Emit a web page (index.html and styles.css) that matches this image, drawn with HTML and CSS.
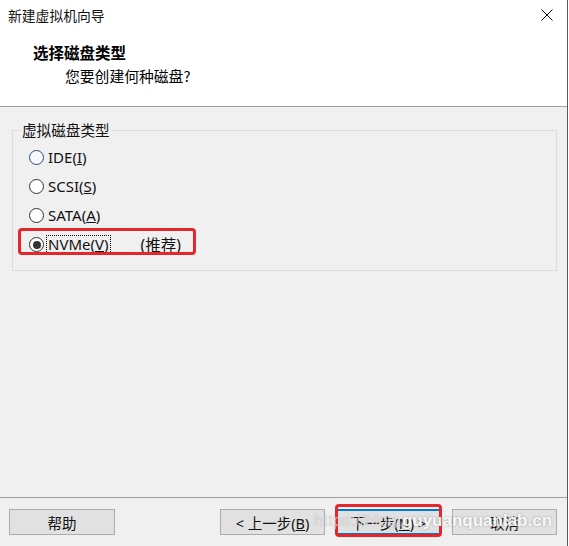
FILE: index.html
```html
<!DOCTYPE html>
<html lang="zh-CN">
<head>
<meta charset="utf-8">
<title>新建虚拟机向导</title>
<link rel="stylesheet" href="styles.css">
</head>
<body>
<div class="window">
  <div class="top">
    <div class="titlebar">
      <span class="title">新建虚拟机向导</span>
      <span class="close">
        <svg width="12" height="12" viewBox="0 0 12 12"><path d="M0.5 0.5 L11.5 11.5 M11.5 0.5 L0.5 11.5" stroke="#111" stroke-width="1" fill="none"/></svg>
      </span>
    </div>
    <div class="header">
      <div class="heading">选择磁盘类型</div>
      <div class="subtitle">您要创建何种磁盘?</div>
    </div>
  </div>
  <div class="content">
    <fieldset class="group">
      <legend class="legend">虚拟磁盘类型</legend>
      <div class="option">
        <span class="radio hover"></span>
        <span class="label">IDE(<u>I</u>)</span>
      </div>
      <div class="option">
        <span class="radio"></span>
        <span class="label">SCSI(<u>S</u>)</span>
      </div>
      <div class="option">
        <span class="radio"></span>
        <span class="label">SATA(<u>A</u>)</span>
      </div>
      <div class="option selected">
        <span class="radio checked"></span>
        <span class="label focus">NVMe(<u>V</u>)</span>
        <span class="recommend">(推荐)</span>
        <span class="mark mark-option"></span>
      </div>
    </fieldset>
  </div>
  <div class="footer">
    <button class="btn help">帮助</button>
    <div class="spacer"></div>
    <button class="btn">&lt; 上一步(<u>B</u>)</button>
    <div class="btn-wrap">
      <button class="btn default">下一步(<u>N</u>) &gt;</button>
      <span class="mark mark-btn"></span>
    </div>
    <button class="btn">取消</button>
    <span class="watermark">https://blog.<b>guyuanquanlab.cn</b></span>
  </div>
</div>
</body>
</html>
```

FILE: styles.css
```css
html, body {
  margin: 0;
  padding: 0;
  background: #ffffff;
}
body {
  width: 569px;
  height: 546px;
  overflow: hidden;
  font-family: "Noto Sans", "Noto Sans CJK SC", sans-serif;
  color: #000;
}
.window {
  width: 567px;
  height: 546px;
  border-right: 1px solid #5a5a5a;
  background: #f0f0f0;
  display: flex;
  flex-direction: column;
  position: relative;
}
.top {
  background: #ffffff;
  border-bottom: 1px solid #a0a0a0;
  height: 106px;
}
.titlebar {
  height: 30px;
  display: flex;
  align-items: center;
  justify-content: space-between;
  padding-left: 8px;
}
.title {
  font-family: "Noto Sans CJK SC", sans-serif;
  font-size: 13.8px;
  line-height: 30px;
  color: #111;
}
.close {
  width: 40px;
  height: 30px;
  display: flex;
  align-items: center;
  justify-content: center;
}
.header {
  padding-top: 12px;
}
.heading {
  font-family: "Noto Sans CJK SC", sans-serif;
  font-weight: 700;
  font-size: 15.5px;
  line-height: 20px;
  padding-left: 33px;
}
.subtitle {
  font-family: "Noto Sans CJK SC", sans-serif;
  font-size: 14.8px;
  line-height: 20px;
  padding-left: 65px;
  margin-top: 4px;
}
.content {
  height: 391px;
  padding: 14px 10px 0 12px;
  box-sizing: border-box;
  border-bottom: 1px solid #a0a0a0;
}
.group {
  margin: 0;
  border: 1px solid #dcdcdc;
  padding: 4px 0 11px 16px;
  min-width: 0;
}
.legend {
  font-family: "Noto Sans CJK SC", sans-serif;
  font-size: 14.6px;
  line-height: 18px;
  padding: 0 1px;
  margin-left: -8px;
  color: #111;
}
.option {
  height: 29px;
  display: flex;
  align-items: center;
  position: relative;
}
.radio {
  width: 13px;
  height: 13px;
  border: 1px solid #333;
  border-radius: 50%;
  background: #fff;
  display: flex;
  align-items: center;
  justify-content: center;
  flex: none;
}
.radio.hover {
  border-color: #2a4a72;
  background: #f4faff;
}
.radio.checked::after {
  content: "";
  width: 8px;
  height: 8px;
  border-radius: 50%;
  background: #333;
}
.label {
  font-size: 15px;
  line-height: 17px;
  margin-left: 2px;
  padding: 0 1px;
  color: #111;
  border: 1px solid transparent;
}
.label.focus {
  border: 1px dotted #000;
}
.recommend {
  font-family: "Noto Sans", "Noto Sans CJK SC", sans-serif;
  font-size: 15.5px;
  margin-left: 30px;
  color: #111;
}
.mark {
  position: absolute;
  border: 3px solid #e5262b;
  border-radius: 4px;
  box-sizing: border-box;
  pointer-events: none;
}
.mark-option {
  left: -11px;
  top: -2px;
  width: 178px;
  height: 27px;
}
.footer {
  flex: 1;
  display: flex;
  align-items: flex-start;
  padding: 11px 10px 0 9px;
  gap: 11px;
  position: relative;
}
.spacer {
  flex: 1;
}
.btn {
  width: 105px;
  height: 26px;
  box-sizing: border-box;
  background: #e1e1e1;
  border: 1px solid #adadad;
  font-family: "Noto Sans", "Noto Sans CJK SC", sans-serif;
  font-size: 14.5px;
  color: #111;
  padding: 0;
  margin: 0;
  flex: none;
}
.btn.help {
  width: 106px;
}
.btn-wrap {
  position: relative;
  flex: none;
}
.btn.default {
  border: 2px solid #0078d7;
}
.mark-btn {
  left: -1px;
  top: -5px;
  width: 107px;
  height: 33px;
}
.watermark {
  position: absolute;
  left: 314px;
  top: 12px;
  font-family: "Liberation Sans", sans-serif;
  font-size: 17px;
  line-height: 22px;
  color: rgba(255,255,255,0.55);
  text-shadow: 0 0 1px rgba(120,120,120,0.5);
  white-space: nowrap;
  pointer-events: none;
}
.watermark b {
  color: rgba(255,255,255,0.95);
  text-shadow: 0 0 2px rgba(90,90,90,0.6);
}
```
